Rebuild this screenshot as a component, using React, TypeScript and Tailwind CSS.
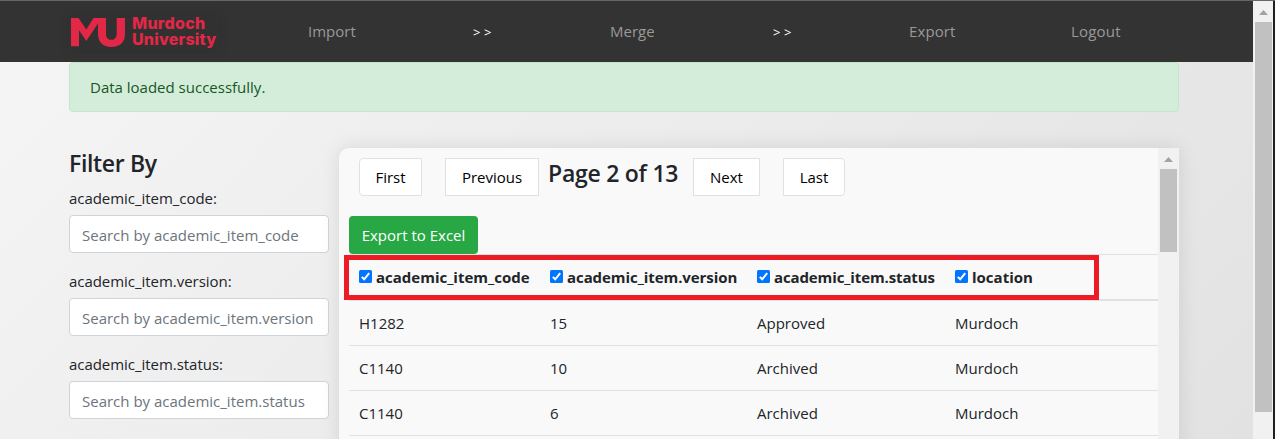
import React from "react";

const filters = ["academic_item_code", "academic_item.version", "academic_item.status"];

const columns = [
  { name: "academic_item_code", spacing: "tracking-normal" },
  { name: "academic_item.version", spacing: "tracking-[-0.07px]" },
  { name: "academic_item.status", spacing: "tracking-[-0.12px]" },
  { name: "location", spacing: "tracking-normal" },
];

const rows = [
  ["H1282", "15", "Approved", "Murdoch"],
  ["C1140", "10", "Archived", "Murdoch"],
  ["C1140", "6", "Archived", "Murdoch"],
];

function Logo() {
  return (
    <div className="mt-[15px] ml-[69px] flex h-[34px] w-[150px] bg-[#313131] pl-[2px] pt-[2px] text-[#e32746] shadow-[0_0_12px_rgba(0,0,0,0.12)]">
      <svg width="55" height="29" viewBox="0 0 55 29" fill="currentColor">
        <path d="M0 0H7.5L15.3 11.5L22.5 0H35V15.5C35 19.5 36.8 21.8 40.3 21.8C43.8 21.8 45.7 19.5 45.7 15.5V0H54V16C54 24 49 28.9 40.3 28.9C32 28.9 27 24 27 16V5.5L15.3 23L8 12.2V28.3H0Z" />
      </svg>
      <div className="ml-[6px] font-['Inter',sans-serif] text-[16px] leading-[16px] font-extrabold">
        <div className="-mt-[3px] tracking-[0.3px]">Murdoch</div>
        <div className="tracking-[0.2px]">University</div>
      </div>
    </div>
  );
}

function Check() {
  return (
    <svg className="mr-1 -mt-[2px] h-[13px] w-[13px] shrink-0" viewBox="0 0 13 13">
      <rect width="13" height="13" rx="1.5" fill="#0075ff" />
      <path d="M2.8 6.9L5.2 9.3L10.2 3.2" fill="none" stroke="#fff" strokeWidth="2" />
    </svg>
  );
}

function Scrollbar({ width, thumb }: { width: string; thumb: string }) {
  return (
    <div className={`flex shrink-0 flex-col bg-[#f1f1f1] px-[2px] ${width}`}>
      <div className="flex h-[21px] items-center justify-center pt-[2px]">
        <svg width="9" height="5" viewBox="0 0 9 5">
          <path d="M4.5 0L9 5H0Z" fill="#a3a3a3" />
        </svg>
      </div>
      <div className={`bg-[#c1c1c1] ${thumb}`} />
    </div>
  );
}

export default function App() {
  return (
    <div className="flex h-[439px] w-[1275px] overflow-hidden border-t border-[#666] bg-[#202020] font-['Open_Sans',sans-serif] text-[15px] leading-6 text-[#212529]">
      <div className="flex w-[1253px] shrink-0 flex-col bg-[linear-gradient(135deg,#f5f5f5,#e2e2e2)]">
        <nav className="flex h-[61px] shrink-0 bg-[#333] text-[#999]">
          <Logo />
          <div className="flex pt-[18px] pl-[89px]">
            <a className="w-[165px]">Import</a>
            <span className="w-[137px] pt-[1px] text-[13px] tracking-[3.5px] text-white">&gt;&gt;</span>
            <a className="w-[163px]">Merge</a>
            <span className="w-[136px] pt-[1px] text-[13px] tracking-[3.5px] text-white">&gt;&gt;</span>
            <a className="w-[162px] tracking-[0.1px]">Export</a>
            <a className="tracking-[0.2px]">Logout</a>
          </div>
        </nav>
        <div className="ml-[69px] h-[50px] w-[1110px] shrink-0 rounded border border-[#c3e6cb] bg-[#d4edda] pt-[12px] pl-[20px] text-[#155724]">
          Data loaded successfully.
        </div>
        <div className="ml-[69px] flex pt-[36px]">
          <aside className="w-[270px] shrink-0">
            <h4 className="mb-[8px] pt-[1px] text-[23px] leading-[29px] font-semibold tracking-[-0.35px]">Filter By</h4>
            {filters.map((name) => (
              <div key={name} className="mb-[16px]">
                <div className="mb-[5px] tracking-[-0.04px]">{name}:</div>
                <div className="h-[38px] w-[260px] overflow-hidden rounded border border-[#ced4da] bg-white pt-[7px] pl-[12px] whitespace-nowrap text-[#6c757d]">
                  Search by {name}
                </div>
              </div>
            ))}
          </aside>
          <main className="flex h-[400px] w-[840px] overflow-hidden rounded-tl-[10px] bg-[#f9f9f9] shadow-[0_0_20px_rgba(0,0,0,0.1)]">
            <div className="w-[819px] shrink-0 pt-[10px] pl-[10px]">
              <div className="flex h-[38px] pl-[10px] text-black">
                <button className="w-[63px] rounded-l border border-[#dee2e6] bg-white">First</button>
                <button className="ml-[23px] w-[94px] border border-[#dee2e6] bg-white">Previous</button>
                <h4 className="ml-[9px] w-[145px] text-[23px] leading-[31px] font-semibold tracking-[-0.25px] whitespace-nowrap text-[#212529]">Page 2 of 13</h4>
                <button className="w-[67px] border border-[#dee2e6] bg-white">Next</button>
                <button className="ml-[23px] w-[62px] rounded-r border border-[#dee2e6] bg-white">Last</button>
              </div>
              <button className="mt-[20px] block h-[38px] w-[129px] rounded bg-[#28a745] text-white">Export to Excel</button>
              <div className="relative grid h-[47px] grid-cols-[191px_207px_198px_213px] border-t border-b-2 border-[#dee2e6] font-bold">
                {columns.map((c) => (
                  <div key={c.name} className={`flex items-center pl-[10px] whitespace-nowrap ${c.spacing}`}>
                    <Check />
                    {c.name}
                  </div>
                ))}
                <div className="absolute top-0 -left-[5px] h-[45px] w-[755px] border-5 border-[#ed1c24]" />
              </div>
              {rows.map((r, i) => (
                <div key={i} className="grid h-[45px] grid-cols-[191px_207px_198px_213px] border-b border-[#dee2e6]">
                  {r.map((v, j) => (
                    <div key={j} className="pt-[10px] pl-[10px]">{v}</div>
                  ))}
                </div>
              ))}
            </div>
            <Scrollbar width="w-[21px]" thumb="h-[83px]" />
          </main>
        </div>
      </div>
      <Scrollbar width="w-[20px]" thumb="h-[390px] w-[17px]" />
    </div>
  );
}
